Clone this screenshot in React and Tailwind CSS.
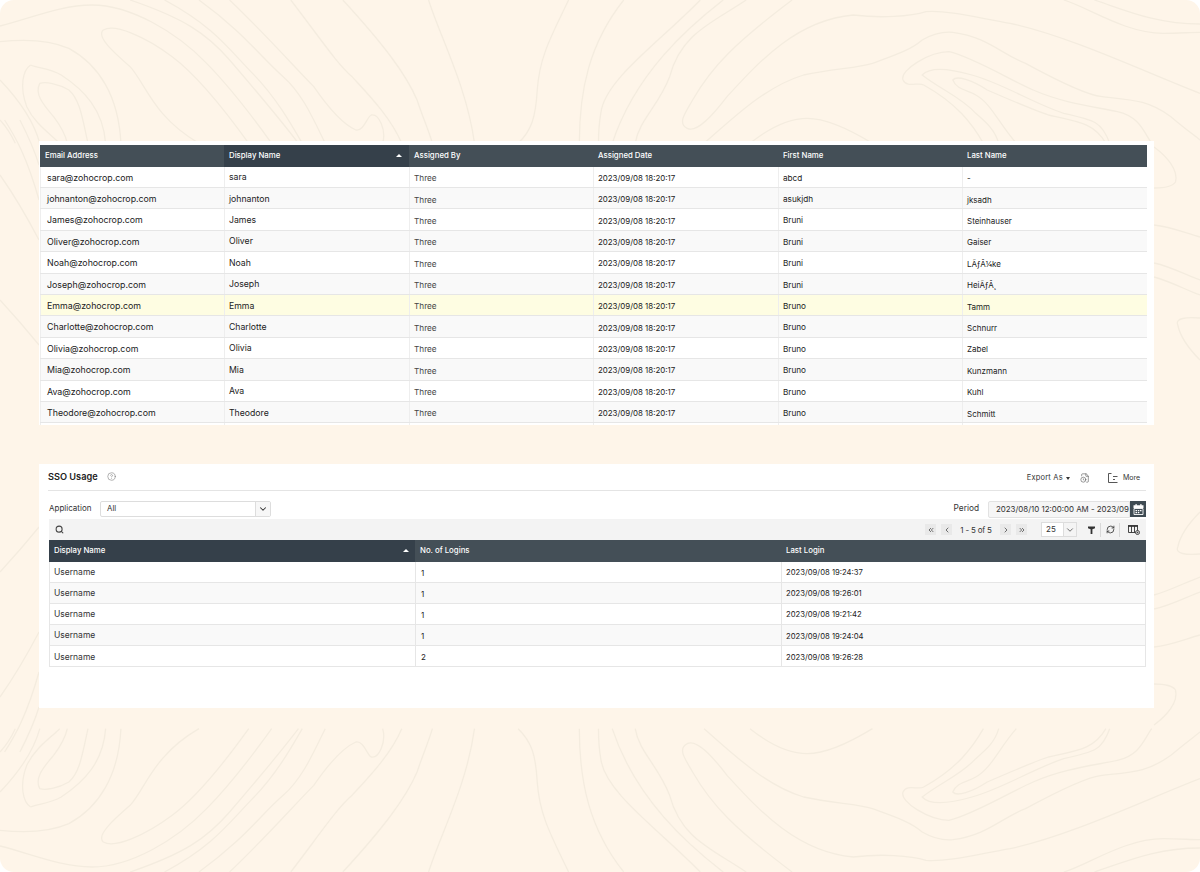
import { ChevronDown, ChevronLeft, ChevronRight, ChevronsLeft, ChevronsRight, CircleHelp, FileClock, RefreshCw, Search } from "lucide-react";

const font = { fontFamily: "Inter, 'Noto Sans', sans-serif" };

const users = [
    ["sara@zohocrop.com", "sara", "abcd", "-"],
    ["johnanton@zohocrop.com", "johnanton", "asukjdh", "jksadh"],
    ["James@zohocrop.com", "James", "Bruni", "Steinhauser"],
    ["Oliver@zohocrop.com", "Oliver", "Bruni", "Gaiser"],
    ["Noah@zohocrop.com", "Noah", "Bruni", "LÃƒÂ¼ke"],
    ["Joseph@zohocrop.com", "Joseph", "Bruni", "HeiÃƒÂ¸"],
    ["Emma@zohocrop.com", "Emma", "Bruno", "Tamm"],
    ["Charlotte@zohocrop.com", "Charlotte", "Bruno", "Schnurr"],
    ["Olivia@zohocrop.com", "Olivia", "Bruno", "Zabel"],
    ["Mia@zohocrop.com", "Mia", "Bruno", "Kunzmann"],
    ["Ava@zohocrop.com", "Ava", "Bruno", "Kuhl"],
    ["Theodore@zohocrop.com", "Theodore", "Bruno", "Schmitt"],
];

const logins = [
    ["1", "2023/09/08 19:24:37"],
    ["1", "2023/09/08 19:26:01"],
    ["1", "2023/09/08 19:21:42"],
    ["1", "2023/09/08 19:24:04"],
    ["2", "2023/09/08 19:26:28"],
];

// contour lines of the top half, the bottom half is the same group flipped
const contours = [
    "M0,78 C40,55 80,15 120,15 C170,15 230,95 270,190 C300,260 330,350 355,430",
    "M170,0 C240,55 270,100 300,180 C330,260 360,340 390,430",
    "M215,0 C280,80 300,150 330,220 C360,290 380,370 395,430",
    "M260,0 C320,100 340,170 370,230 C395,280 410,360 425,430",
    "M300,0 C350,110 380,190 410,260 C425,310 445,370 465,390 C475,395 480,350 485,345 C495,340 505,390 500,430",
    "M380,0 C420,120 440,190 460,230 C480,280 510,350 525,430",
    "M448,0 C500,130 530,220 545,300 C552,350 560,390 565,430",
    "M560,0 C575,110 610,260 620,430",
    "M743,0 C720,110 705,170 702,270 C700,350 695,390 677,430",
    "M815,0 C770,130 757,270 757,430",
    "M915,0 C860,130 790,240 785,340 C782,380 782,400 782,430",
    "M945,0 C900,80 830,220 800,430",
    "M975,0 C930,70 890,100 875,230 C860,320 835,360 830,430",
    "M1035,0 C960,130 930,200 905,300 C895,340 885,370 898,385 C910,400 930,350 950,290 C990,190 1040,60 1115,45 C1150,55 1190,50 1210,35 C1240,30 1280,55 1320,70 C1400,110 1500,220 1568,280",
    "M920,430 C960,350 1000,260 1050,225 C1090,205 1120,205 1140,190 C1170,165 1190,150 1205,120 C1220,100 1235,95 1245,97 C1290,110 1310,165 1340,190 C1380,240 1420,285 1440,290 C1480,300 1500,300 1530,350 C1545,380 1560,405 1568,420",
    "M1285,430 C1270,370 1250,310 1207,255 C1200,245 1185,265 1180,240 C1175,210 1215,155 1240,155 C1270,170 1320,240 1350,270 C1390,310 1430,320 1460,335 C1490,350 1495,400 1505,430",
    "M1305,430 C1300,390 1290,370 1275,340 C1255,290 1230,270 1205,225 C1215,200 1240,205 1270,225 C1310,250 1350,310 1390,340 C1430,360 1440,365 1450,430",
    "M1328,430 C1305,370 1295,310 1275,285 C1265,270 1250,270 1245,240 C1250,225 1270,240 1290,270 C1320,300 1350,330 1370,345 C1410,365 1430,370 1445,430",
    "M980,430 C1010,375 1035,355 1055,355 C1080,355 1115,395 1140,430",
    "M1390,0 C1420,20 1470,100 1520,100 C1540,100 1555,97 1568,97",
    "M1430,0 C1470,30 1510,72 1568,72",
    "M0,125 C20,120 60,115 90,145 C130,195 155,290 158,430",
    "M0,240 C25,300 45,370 52,430",
    "M0,360 C10,385 15,405 20,430",
    "M40,195 C30,210 25,260 35,320 C45,370 65,400 78,430",
    "M40,195 C50,205 65,205 80,225 C110,270 135,330 138,430",
    "M115,430 C108,360 105,300 90,270 C75,250 60,245 52,250 C45,280 55,310 70,350 C80,380 85,400 88,430",
    "M260,430 C200,350 190,250 170,200 C150,160 125,110 135,90 C150,70 190,110 225,170 C260,230 300,350 325,430",
    "M1508,441 C1525,470 1540,510 1536,546 C1532,560 1520,564 1508,564",
    "M1508,675 C1530,680 1550,700 1568,711",
    "M1508,789 C1530,800 1550,825 1568,840",
    "M1508,831 C1530,845 1550,870 1568,885",
    "M1568,954 C1550,950 1535,955 1539,975 C1542,1010 1555,1050 1568,1080",
    "M26,360 C35,400 45,450 51,495",
    "M6,360 C20,410 35,470 51,600",
    "M0,525 C20,590 35,650 51,720",
    "M0,900 C20,950 35,990 51,1035",
];

function Contours() {
    const lines = contours.map((d, i) => (
        <path key={i} d={d} vectorEffect="non-scaling-stroke" />
    ));
    return (
        <svg viewBox="0 0 1568 2616" preserveAspectRatio="none" className="absolute inset-0 w-full h-full" fill="none" stroke="#f4ecdf" strokeWidth="1.3">
            <g>{lines}</g>
            <g transform="matrix(1 0 0 -1 0 2616)">{lines}</g>
        </svg>
    );
}

function SortCaret() {
    return <span className="w-0 h-0 border-l-[3px] border-r-[3px] border-b-[3px] border-l-transparent border-r-transparent border-b-white" />;
}

function PageButton({ children }) {
    return (
        <span className="w-[11px] h-[11px] flex items-center justify-center bg-[#e9e9e9] text-[#555]">
            {children}
        </span>
    );
}

function Divider() {
    return <span className="w-px h-[14px] bg-[#d8d8d8]" />;
}

function MoreIcon() {
    return (
        <svg width="10" height="10" viewBox="0 0 10 10" fill="none" stroke="#444" strokeWidth="0.9">
            <path d="M0.5 0.5V9.5H9.5M0.5 0.5H3.5M5 3.5H9.5M5 6.5H7" />
        </svg>
    );
}

function FilterIcon() {
    return (
        <svg width="7" height="8" viewBox="0 0 7 8" fill="#333">
            <path d="M0 0.5H7V2.2L4.4 3.2V8H2.6V3.2L0 2.2Z" />
        </svg>
    );
}

function ColumnsIcon() {
    return (
        <svg width="12" height="10" viewBox="0 0 12 10" fill="none" stroke="#333">
            <path d="M0.5 1H9.5V7.5H0.5ZM3.5 1V7.5M6.5 1V7.5" strokeWidth="0.9" />
            <path d="M0 0.9H10" strokeWidth="1.6" />
            <circle cx="9.5" cy="7.5" r="2" fill="#fff" strokeWidth="0.9" />
            <path d="M8.5 7.5H10.5M9.5 6.5V8.5" strokeWidth="0.7" />
        </svg>
    );
}

function CalendarIcon() {
    return (
        <svg width="11" height="11" viewBox="0 0 11 11">
            <path d="M2.5 0H3.7V1.2H7.3V0H8.5V1.2H10.5V4H0.5V1.2H2.5Z" fill="#fff" />
            <path d="M1 4.5H10V10.5H1Z" fill="none" stroke="#fff" strokeWidth="0.9" />
            <path d="M2.5 6H4V7.2H2.5ZM4.8 6H6.3V7.2H4.8ZM7 6H8.5V7.2H7ZM2.5 8H4V9.2H2.5ZM4.8 8H6.3V9.2H4.8Z" fill="#fff" />
        </svg>
    );
}

const headCell = "flex items-center pl-[5px]";
const bodyLine = "flex items-center pl-[4px] border-l border-[#eeeeee]";

export default function App() {
    return (
        <div className="w-[1200px] h-[872px] bg-white" style={font}>
            <div className="relative w-full h-full overflow-hidden rounded-[14px] bg-[#fef5e9] pt-[141px] pl-[39px]">
                <Contours />
                <div className="relative w-[1115px] h-[567px] bg-[#fef5e9]">
                    <div className="h-[284px] bg-white pt-[4px] pl-[1px] overflow-hidden">
                        <div className="w-[1107px]">
                            <div className="grid grid-cols-[184px_185px_184px_185px_184px_185px] h-[21.6px] bg-[#444f57] text-white text-[7.8px] font-medium">
                                <div className={headCell}>Email Address</div>
                                <div className="flex items-center justify-between pl-[5px] pr-[7px] bg-[#35404a]">
                                    Display Name
                                    <SortCaret />
                                </div>
                                <div className={headCell}>Assigned By</div>
                                <div className={headCell}>Assigned Date</div>
                                <div className={headCell}>First Name</div>
                                <div className={headCell}>Last Name</div>
                            </div>
                            {users.map((u, i) => (
                                <div
                                    key={u[0]}
                                    className={`grid grid-cols-[184px_185px_184px_185px_184px_185px] h-[21.4px] border-b border-[#e6e6e6] text-[#222] ${u[1] === "Emma" ? "bg-[#fefde2]" : i % 2 ? "bg-[#f9f9f9]" : "bg-white"}`}
                                >
                                    <div className="flex items-center pl-[6px] pt-[1px] text-[8.8px] border-l border-[#eeeeee]">{u[0]}</div>
                                    <div className={`${bodyLine} pt-[2px] text-[8.7px]`}>{u[1]}</div>
                                    <div className={`${bodyLine} pt-[3px] text-[8.2px] text-[#444]`}>Three</div>
                                    <div className={`${bodyLine} pt-[4px] text-[7.9px]`}>2023/09/08 18:20:17</div>
                                    <div className={`${bodyLine} pt-[2px] text-[8.2px]`}>{u[2]}</div>
                                    <div className={`${bodyLine} pt-[3px] text-[8px]`}>{u[3]}</div>
                                </div>
                            ))}
                            <div className="grid grid-cols-[184px_185px_184px_185px_184px_185px] h-[21px] bg-white">
                                <div className="border-l border-[#eeeeee]" />
                                <div className="border-l border-[#eeeeee]" />
                                <div className="border-l border-[#eeeeee]" />
                                <div className="border-l border-[#eeeeee]" />
                                <div className="border-l border-[#eeeeee]" />
                                <div className="border-l border-[#eeeeee]" />
                            </div>
                        </div>
                    </div>

                    <div className="mt-[39px] h-[244px] bg-white pl-[9px] pr-[8px]">
                        <div className="flex items-center justify-between h-[27px] border-b border-[#e4e4e4]">
                            <div className="flex items-center gap-[9px]">
                                <span className="text-[9.2px] font-semibold text-[#222]">SSO Usage</span>
                                <CircleHelp className="w-[9px] h-[9px] text-[#777]" strokeWidth={1.5} />
                            </div>
                            <div className="flex items-center pt-[2px] text-[7.5px] text-[#333] tracking-[0.2px] pr-[6px]">
                                <span>Export As</span>
                                <span className="ml-[3px] w-0 h-0 border-l-[2.5px] border-r-[2.5px] border-t-[3px] border-l-transparent border-r-transparent border-t-[#333]" />
                                <FileClock className="ml-[10px] w-[10px] h-[10px] text-[#444]" strokeWidth={1.3} />
                                <span className="ml-[18px]"><MoreIcon /></span>
                                <span className="ml-[5px] text-[7px] tracking-normal">More</span>
                            </div>
                        </div>
                        <div className="flex justify-between pt-[10px] h-[28px]">
                            <div className="flex items-start">
                                <span className="w-[52px] pl-px pt-[1px] text-[8px] text-[#333]">Application</span>
                                <div className="flex w-[171px] h-[16px] border border-[#dddddd] rounded-[2px] text-[7.8px] text-[#333]">
                                    <span className="flex-1 pl-[6px] leading-[13px]">All</span>
                                    <span className="w-[15px] flex items-center justify-center border-l border-[#dddddd] bg-[#f7f7f7]">
                                        <ChevronDown className="w-[10px] h-[10px] text-[#333]" strokeWidth={2.5} />
                                    </span>
                                </div>
                            </div>
                            <div className="flex items-start">
                                <span className="pt-[1px] text-[8.3px] text-[#333]">Period</span>
                                <div className="ml-[9px] w-[142px] h-[17px] border border-[#e2e2e2] bg-[#f6f6f6] rounded-l-[2px] pl-[7px] text-[7.9px] leading-[15px] text-[#333] whitespace-nowrap">
                                    2023/08/10 12:00:00 AM - 2023/09
                                </div>
                                <span className="w-[16px] h-[16px] flex items-center justify-center bg-[#3f4b53]">
                                    <CalendarIcon />
                                </span>
                            </div>
                        </div>
                        <div className="flex items-center justify-between h-[21px] bg-[#f3f3f3] ml-px pl-[6px] pr-[6px]">
                            <Search className="w-[9px] h-[9px] text-[#444]" strokeWidth={2.8} />
                            <div className="flex items-center text-[8px] text-[#333]">
                                <PageButton><ChevronsLeft className="w-[8px] h-[8px]" strokeWidth={2.5} /></PageButton>
                                <span className="ml-[5px]"><PageButton><ChevronLeft className="w-[8px] h-[8px]" strokeWidth={2.5} /></PageButton></span>
                                <span className="w-[48px] text-center pt-px tracking-tight">1 - 5 of 5</span>
                                <PageButton><ChevronRight className="w-[8px] h-[8px]" strokeWidth={2.5} /></PageButton>
                                <span className="ml-[5px]"><PageButton><ChevronsRight className="w-[8px] h-[8px]" strokeWidth={2.5} /></PageButton></span>
                                <span className="mx-[7px]"><Divider /></span>
                                <div className="flex w-[36px] h-[15px] bg-white border border-[#dddddd]">
                                    <span className="flex-1 pl-[4px] leading-[13px]">25</span>
                                    <span className="w-[13px] flex items-center justify-center border-l border-[#dddddd] bg-[#f4f4f4]">
                                        <ChevronDown className="w-[10px] h-[10px] text-[#555]" />
                                    </span>
                                </div>
                                <span className="ml-[6px]"><Divider /></span>
                                <span className="w-[17px] flex justify-center"><FilterIcon /></span>
                                <Divider />
                                <span className="w-[18px] flex justify-center"><RefreshCw className="w-[9px] h-[9px] text-[#333]" strokeWidth={2.2} /></span>
                                <Divider />
                                <span className="ml-[8px]"><ColumnsIcon /></span>
                            </div>
                        </div>
                        <div className="w-[1097px] ml-px">
                            <div className="grid grid-cols-[366px_366px_365px] h-[21.5px] bg-[#444f57] text-white text-[7.8px] font-medium">
                                <div className="flex items-center justify-between pl-[5px] pr-[6px] bg-[#35404a]">
                                    Display Name
                                    <SortCaret />
                                </div>
                                <div className={headCell}>No. of Logins</div>
                                <div className={headCell}>Last Login</div>
                            </div>
                            {logins.map((l, i) => (
                                <div
                                    key={l[1]}
                                    className={`grid grid-cols-[365px_366px_364px] h-[21.1px] border-b border-x border-[#e6e6e6] text-[#222] ${i % 2 ? "bg-[#f9f9f9]" : "bg-white"}`}
                                >
                                    <div className="flex items-center pl-[4px] pt-[2px] text-[8.5px] text-[#333]">Username</div>
                                    <div className="flex items-center pl-[5px] pt-[3px] text-[8px] border-l border-[#e6e6e6]">{l[0]}</div>
                                    <div className="flex items-center pl-[4px] pt-[3px] text-[7.7px] border-l border-[#e6e6e6]">{l[1]}</div>
                                </div>
                            ))}
                        </div>
                    </div>
                </div>
            </div>
        </div>
    );
}
